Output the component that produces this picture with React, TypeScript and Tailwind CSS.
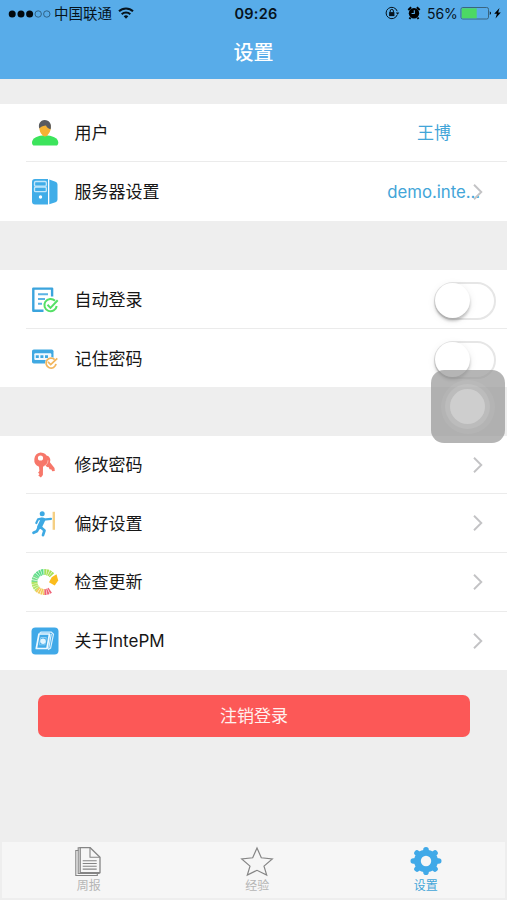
import type { ReactNode } from "react";

type RowProps = {
  icon: ReactNode;
  label: string;
  children?: ReactNode;
  last?: boolean;
};

function Chevron() {
  return (
    <svg width="12" height="18" viewBox="0 0 12 18" fill="none" className="mr-[23px] shrink-0">
      <path d="M2 1.8 9.3 9 2 16.2" stroke="#c3c3c5" strokeWidth="1.9" />
    </svg>
  );
}

function Row({ icon, label, children, last }: RowProps) {
  return (
    <div className="flex h-[58.6px] pl-[26px]">
      <div
        className={`flex flex-1 items-center pl-[5px] ${
          last ? "" : "border-b-[1.6px] border-[#ebebeb]"
        }`}
      >
        <svg width="28" height="28" viewBox="0 0 28 28" fill="none" className="mt-px shrink-0">
          {icon}
        </svg>
        <span className="ml-[15.5px] pt-px text-[17px] leading-6 text-[#161616]">{label}</span>
        <div className="ml-auto flex items-center">{children}</div>
      </div>
    </div>
  );
}

function Toggle() {
  return (
    <div className="relative mt-[3px] mr-[11px] h-[38px] w-[62px] rounded-full border-2 border-[#e6e6e6] bg-white">
      <div className="absolute -top-px -left-px size-[35px] rounded-full bg-white shadow-[0_3px_3px_rgba(0,0,0,0.22),0_2px_9px_rgba(0,0,0,0.08)]" />
    </div>
  );
}

const userIcon = (
  <>
    <path d="M1 23.5C1 19.2 7 16.2 14 16.2S27.3 19.2 27.3 23.5C27.3 25.6 26.5 26.6 25 26.6H3.500C1.800 26.600 1 25.600 1 23.500Z" fill="#3ce45c" />
    <path d="M8.300 8C8.300 3.800 10.600 2 14 2s5.800 2.500 5.800 6.500c0 3.600-1.700 6-3 7.300-.3 1.200-1.300 1.700-2.800 1.700s-2.500-.5-2.800-1.700C9.500 14.300 8.300 11.700 8.300 8Z" fill="#f5b233" />
    <path d="M8.400 9.500C6.800 5.500 9.300 1 13.600 1c4.700 0 7.500 4 6 9.300-1.800-.3-3.800-1.700-4.600-3.800-2.300.1-4.700.6-6.600 3Z" fill="#585a60" />
  </>
);

const serverIcon = (
  <>
    <path d="M4 1h13v25.500H4a3 3 0 0 1-3-3V4a3 3 0 0 1 3-3Z" fill="#40ade8" />
    <path d="M18.300 1.500l6.200 2.300q2 .7 2 2.700v15q0 2-2 2.700l-6.200 2.100Z" fill="#40ade8" />
    <rect x="3.500" y="3.500" width="11.800" height="4.600" rx="1.200" stroke="#c4e7fa" strokeWidth="1.3" />
    <rect x="3.500" y="9" width="11.800" height="4.600" rx="1.200" stroke="#c4e7fa" strokeWidth="1.3" />
    <circle cx="9.500" cy="19" r="1.700" fill="#fff" />
  </>
);

const autoLoginIcon = (
  <>
    <path d="M12.500 24.800H2.300V2.600h18.800v8" stroke="#3ba4dd" strokeWidth="2.4" strokeLinejoin="round" />
    <path d="M7 8.300h10M7 13h7M7 17.700h4" stroke="#5bb3e4" strokeWidth="1.9" />
    <path d="M24 14.800a6.200 6.200 0 1 0 1.700 5.200" stroke="#55e066" strokeWidth="2" />
    <path d="m16.500 18.700 3 3.200 7.200-7.600" stroke="#55e066" strokeWidth="2" />
  </>
);

const passwordIcon = (
  <>
    <rect x="1" y="4.500" width="21.500" height="14" rx="1.800" fill="#40a9e2" />
    <rect x="3.300" y="8.300" width="17" height="6.700" rx="1" fill="#f2faff" />
    <path d="M4.800 11.700H18" stroke="#40a9e2" strokeWidth="2.8" strokeDasharray="3 1.600" />
    <circle cx="20" cy="18" r="6" fill="#fff" />
    <path d="M23.700 14.700a5 5 0 1 0 1.300 4.200" stroke="#f2b65d" strokeWidth="1.8" />
    <path d="m17 16.800 2.700 2.800 6.600-6.300" stroke="#f2b65d" strokeWidth="1.8" />
  </>
);

const keysIcon = (
  <>
    <path d="M14.500 4.500c3.600-.2 5.900 3.500 4.400 6.700l4.600 5.700.3 3.200-2.600.2-.8-1.900-1.900-.2-.7-2-1.900-.2-2.700-3.500Z" fill="#f7776a" />
    <path fillRule="evenodd" d="M9.500 1.500a7.400 7.400 0 0 1 2.500 14.300l-.1 8.200-2 2.600-2.600-2.100 1.200-1.500-1.400-1.300 1.300-1.800-.4-4.200A7.400 7.400 0 0 1 9.500 1.500Zm0 2.900a2.600 2.600 0 1 0 0 5.200 2.600 2.600 0 0 0 0-5.200Z" fill="#f7776a" />
    <path d="M17 9.300c.1 2.500-1.400 4.700-3.700 5.800" stroke="#ffd6d0" strokeWidth=".7" />
  </>
);

const preferenceIcon = (
  <>
    <circle cx="11.200" cy="3.700" r="2.500" fill="#3da9e3" />
    <path d="m11.800 10-3.200 6.800" stroke="#3da9e3" strokeWidth="4.8" strokeLinecap="round" />
    <path d="M12.500 9.700l7.500-.8M10.500 8.700l-3.500.7-1.700 3.600" stroke="#3da9e3" strokeWidth="2.2" strokeLinecap="round" strokeLinejoin="round" />
    <path d="m7.800 17.500-2 3.800-3.300 1.500M9.500 17l4 3.500-1.500 4.700" stroke="#3da9e3" strokeWidth="2.700" strokeLinecap="round" strokeLinejoin="round" />
    <path d="M22.800 1.800v18" stroke="#f5cf83" strokeWidth="2.4" />
  </>
);

const updateIcon = (
  <>
    <g strokeWidth="6" strokeDasharray="1.7 .5">
      <path d="M5.300 8.300A10 10 0 0 1 13.500 4" stroke="#5edc8a" />
      <path d="M13.500 4A10 10 0 0 1 21.200 7.600" stroke="#a8e055" />
      <path d="M5.300 8.300A10 10 0 0 0 3.500 14" stroke="#78df8d" />
      <path d="M3.500 14A10 10 0 0 0 6.400 21.100" stroke="#b3e566" />
      <path d="M6.400 21.100A10 10 0 0 0 13.500 24" stroke="#f3cb58" />
      <path d="M13.500 24A10 10 0 0 0 19.200 22.200" stroke="#ee6478" />
    </g>
    <path d="m25.500 6.300 1.700 6.200-3.500 5-5.700-3.300 2.700-5Z" fill="#fbbc1c" />
  </>
);

const aboutIcon = (
  <>
    <rect x=".5" y=".5" width="27" height="27" rx="4" fill="#40a9e8" />
    <path d="M8 7h10.500l-2.500 14.500H5.300Z" stroke="#eef9ff" strokeWidth="1.7" strokeLinejoin="round" />
    <path d="m8.500 6.500 1.500-1.300h10.300l2.200 2-2.900 14-2.600 1.400M20.300 7l-2.600 14.500" stroke="#d7f0ff" strokeWidth="1.2" />
    <path d="M9.800 10.500h5.500l-1.300 7.300H8.300Z" stroke="#8bcdf2" strokeWidth="1" />
    <circle cx="12" cy="14.300" r="2.700" fill="#e3f5ff" />
  </>
);

function StatusBar() {
  return (
    <div className="relative flex h-[28px] items-center text-[#06131d]">
      <svg width="46" height="10" viewBox="0 0 46 10" className="ml-[7px]">
        <g fill="#02090e">
          <circle cx="5.200" cy="5" r="3.500" />
          <circle cx="14" cy="5" r="3.500" />
          <circle cx="22.600" cy="5" r="3.500" />
        </g>
        <g fill="none" stroke="#2b5a7c" strokeWidth=".9">
          <circle cx="31.200" cy="5" r="3.200" />
          <circle cx="39.800" cy="5" r="3.200" />
        </g>
      </svg>
      <span className="ml-px text-[14.5px] leading-5">中国联通</span>
      <svg width="16" height="12" viewBox="0 0 16 12" className="-mt-[2px] ml-[6px]" fill="none" stroke="#06131d" strokeWidth="2">
        <path d="M1 4.300a10 10 0 0 1 14 0M3.700 7.200a6.100 6.100 0 0 1 8.600 0" />
        <path d="M8 11.700 5.700 9.300a3.300 3.300 0 0 1 4.600 0Z" fill="#06131d" stroke="none" />
      </svg>
      <span className="absolute inset-x-0 pl-[5px] text-center text-[14.5px] font-semibold tracking-[.2px]">09:26</span>
      <div className="ml-auto flex items-center pr-[4px]">
        <svg width="15" height="14" viewBox="0 0 15 14" fill="none" stroke="#06131d" className="-mt-[2px]">
          <path d="M12.200 8.800a5.700 5.700 0 1 1 0-3.600" strokeWidth="1" />
          <path d="m10.800 6.500 3.500 0-1.700 2.300Z" fill="#06131d" stroke="none" />
          <rect x="4.100" y="6.100" width="5.300" height="4" fill="#06131d" stroke="none" />
          <path d="M5.200 6.500V5a1.600 1.600 0 0 1 3.200 0v1.500" />
        </svg>
        <svg width="14" height="14" viewBox="0 0 14 14" className="-mt-[2px] ml-[7px]">
          <circle cx="7" cy="7.300" r="5.200" />
          <path d="m1.300 4 2.900-2.700M12.700 4 9.800 1.300M3.500 11.500l-1 1.500M10.500 11.500l1 1.500" stroke="#000" strokeWidth="2" />
          <path d="M7.300 4.300v3.200H4.600" fill="none" stroke="#58ace9" strokeWidth="1.1" />
        </svg>
        <span className="-mt-px ml-[6px] w-[32px] text-[14px] tracking-[-.1px]">56%</span>
        <svg width="44" height="14" viewBox="0 0 44 14" className="-mt-[2px]">
          <rect x="2" y="1.500" width="27.500" height="11.500" rx="1.800" fill="none" stroke="#3a6580" />
          <path d="M2.700 2.300h15v10h-15Z" fill="#4cd964" />
          <path d="M30.800 5.300q2.400 1.800 0 3.800Z" />
          <path d="m40.500 2-5.300 5.700h2.700L36.500 12.500l5.300-6H39.200Z" />
        </svg>
      </div>
    </div>
  );
}

export default function App() {
  return (
    <main className="relative flex h-[900px] w-[507px] flex-col overflow-hidden bg-[#eee] font-[Inter,'Noto_Sans_CJK_SC',sans-serif]">
      <header className="h-[79px] shrink-0 bg-[#58ace9]">
        <StatusBar />
        <h1 className="mt-[11px] text-center text-[20px] leading-[28px] font-medium text-white">设置</h1>
      </header>

      <section className="mt-[24.9px] bg-white">
        <Row icon={userIcon} label="用户">
          <span className="mr-[56px] pt-[2px] text-[17px] text-[#42a5d8]">王博</span>
        </Row>
        <Row icon={serverIcon} label="服务器设置" last>
          <span className="-mr-[8px] pt-px text-[16.8px] tracking-[-.05px] text-[#42a5d8]">demo.inte...</span>
          <Chevron />
        </Row>
      </section>

      <section className="mt-[49.2px] bg-white">
        <Row icon={autoLoginIcon} label="自动登录">
          <Toggle />
        </Row>
        <Row icon={passwordIcon} label="记住密码" last>
          <Toggle />
        </Row>
      </section>

      <section className="mt-[48.3px] bg-white">
        <Row icon={keysIcon} label="修改密码">
          <Chevron />
        </Row>
        <Row icon={preferenceIcon} label="偏好设置">
          <Chevron />
        </Row>
        <Row icon={updateIcon} label="检查更新">
          <Chevron />
        </Row>
        <Row icon={aboutIcon} label="关于IntePM" last>
          <Chevron />
        </Row>
      </section>

      <button className="mt-[24.5px] mr-[37px] ml-[38px] h-[42.5px] shrink-0 rounded-[7px] bg-[#fc5857] pt-px text-[17px] text-[#fff0ee]">
        注销登录
      </button>

      <nav className="mx-[2px] mt-auto mb-[2px] grid h-[56px] shrink-0 grid-cols-[168.5px_168.5px_168.5px] bg-[#f6f6f6] pl-[2.5px] text-[12px] leading-4 text-[#b5b5b5]">
        <div className="flex flex-col items-center pt-[4px]">
          <svg width="30" height="32" viewBox="0 0 30 32" fill="none" stroke="#858585" strokeWidth="1.1">
            <path d="M4.500 4.500H1.800v25h21.500v-3" />
            <path d="M6.200 1.700h-2v25.800h21.500" />
            <path d="M6.200 1.700h10l9.800 9.500v15.500H6.200Z" fill="#f6f6f6" strokeWidth="1.3" />
            <path d="M16 1.700v9.500h9.800" />
            <path d="M8.700 14.700h14M8.700 17.500h14M8.700 20.300h14M8.700 23.100h14" />
          </svg>
          <span>周报</span>
        </div>
        <div className="flex flex-col items-center pt-[4px]">
          <svg width="34" height="32" viewBox="0 0 34 32" fill="none" stroke="#858585" strokeWidth="1.2">
            <path d="m17 2 4.300 9.800 11 1.100-8.300 7.200 2.700 8.900L17 24.300l-9.700 4.700 2.700-8.900-8.300-7.200 11-1.100Z" />
          </svg>
          <span>经验</span>
        </div>
        <div className="flex flex-col items-center pt-[4px] text-[#42a5d8]">
          <svg width="34" height="32" viewBox="0 0 34 32" fill="none">
            <g stroke="#40a9e8" strokeWidth="5.6" strokeLinecap="round">
              <path d="M17 3.800v22.400M4.300 15h25.400M8 7l18 16M8 23l18-16" />
            </g>
            <ellipse cx="17" cy="15" rx="12" ry="11.200" fill="#40a9e8" />
            <circle cx="17" cy="15" r="5.200" fill="#f6f6f6" />
          </svg>
          <span>设置</span>
        </div>
      </nav>

      {/* floating assistive button */}
      <div className="absolute top-[370px] left-[431px] flex h-[73px] w-[73.5px] items-center justify-center rounded-[13px] bg-[#959595]/70">
        <div className="flex size-[54px] items-center justify-center rounded-full bg-white/6">
          <div className="flex size-[45px] items-center justify-center rounded-full bg-white/10">
            <div className="size-[35px] rounded-full bg-[#cecece]" />
          </div>
        </div>
      </div>
    </main>
  );
}
